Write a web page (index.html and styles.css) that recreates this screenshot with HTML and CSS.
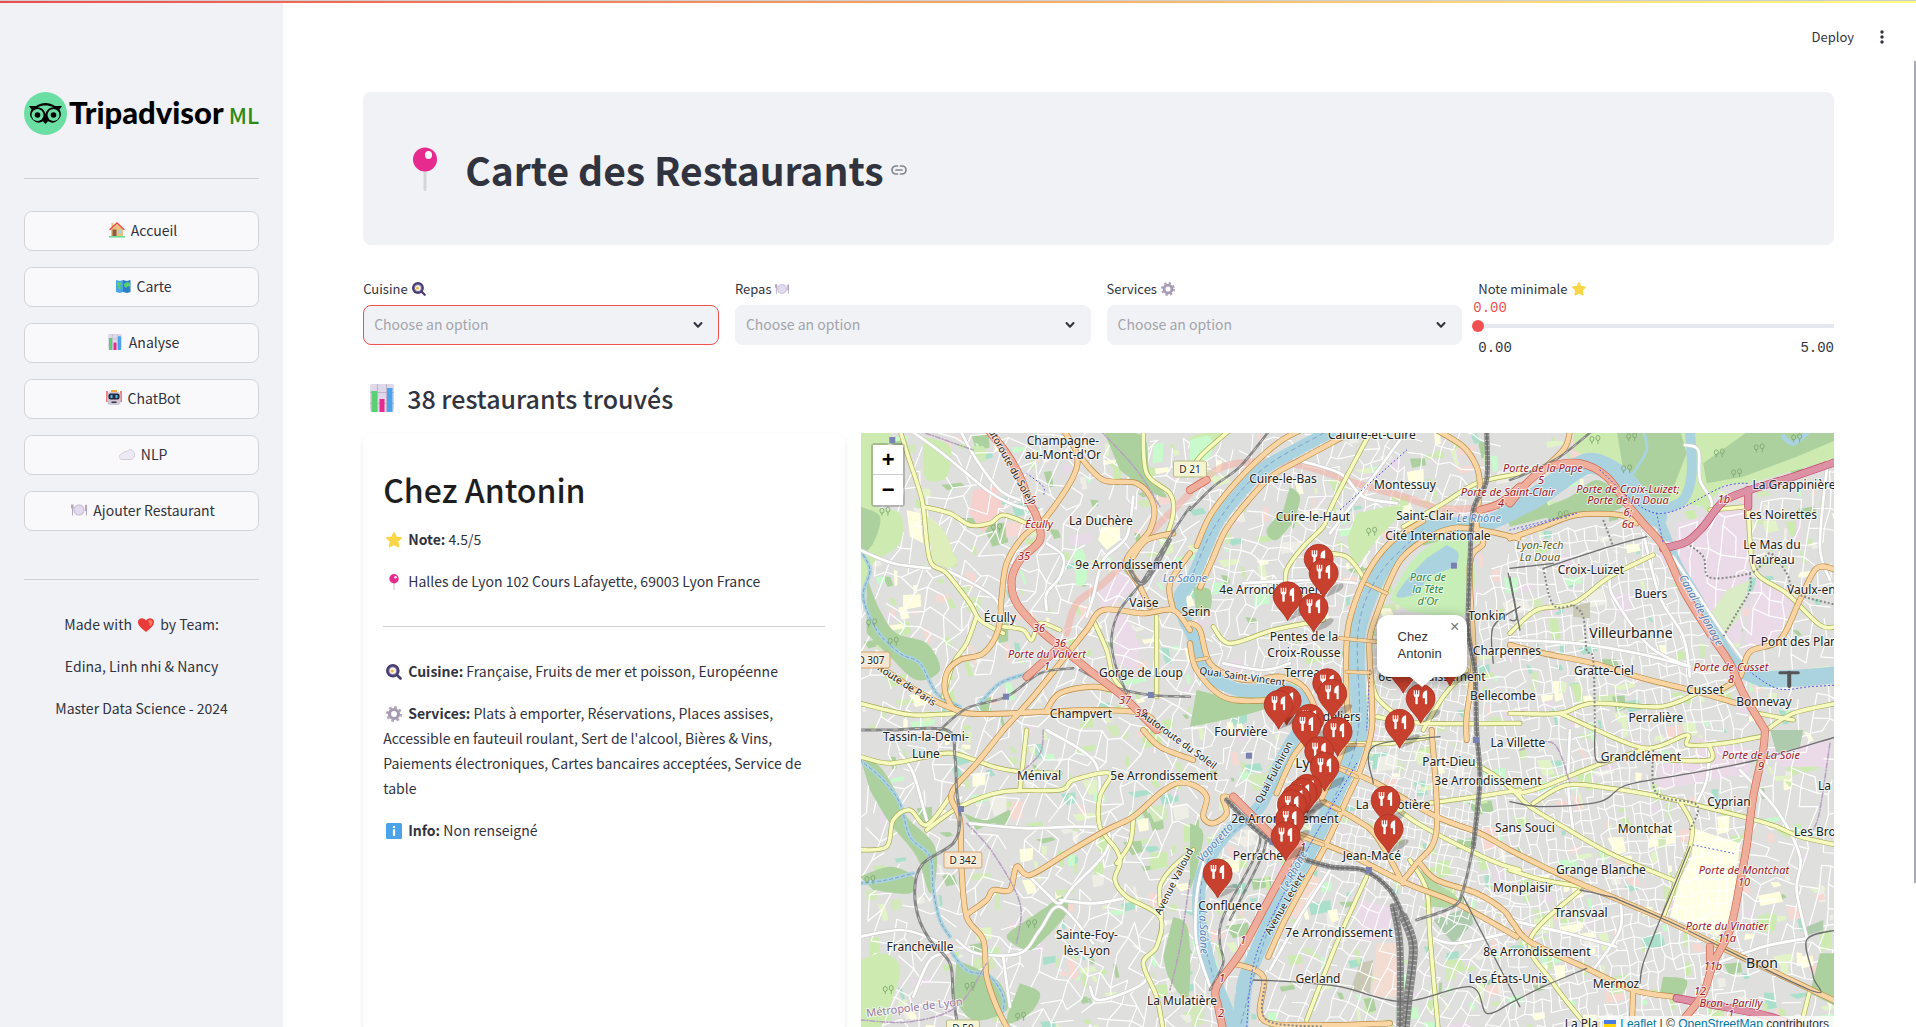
FILE: index.html
```html
<!DOCTYPE html>
<html lang="fr">
<head>
<meta charset="utf-8">
<title>Carte des Restaurants</title>
<link rel="stylesheet" href="styles.css">
</head>
<body>
<svg class="sprite" aria-hidden="true">
  <symbol id="i-house" viewBox="0 0 16 16"><path fill="#6bdc92" d="M0 14h16v1.6H0z"/><path fill="#edc27a" d="M2 7l6-5 6 5v7H2zM2.500 1h2v4h-2z"/><path fill="#8a5a44" d="M3.500 7.500h4V14h-4z"/><path fill="#9bcdf5" d="M9.500 8h3v3.500h-3z"/><path fill="none" stroke="#ef4a4a" stroke-width="1.400" stroke-linecap="round" d="M1 7.500L8 1l7 6.500"/></symbol>
  <symbol id="i-map" viewBox="0 0 16 16"><path fill="#4ba3ea" d="M1 2l4 1 3-1v12l-3 1-4-1z"/><path fill="#2b7fc4" d="M8 2l4 1 3.500-1v12L12 15l-4-1z"/><path fill="#5bd072" d="M2 4l4 .5 1 2-2 1 1 3-2 1.500L3 8 2 7zM9 6l3-2 3 1v4l-2-1-2 2-2-2z"/></symbol>
  <symbol id="i-chart" viewBox="0 0 24 28"><rect width="24" height="28" rx="2" fill="#dfd8ea"/><path stroke="#bdb3cb" fill="none" d="M0 8.500h24M0 19.500h24M7.500 0v28M16.500 0v28"/><path fill="#5bd072" d="M1.500 7h5.500v21H1.500z"/><path fill="#e72a8d" d="M9.500 15h5v13h-5z"/><path fill="#4ba3ea" d="M17 4h5.500v24H17z"/></symbol>
  <symbol id="i-robot" viewBox="0 0 16 16"><path stroke="#ea4040" stroke-width="1.300" d="M1 1v11M15 1v11"/><path fill="#f5a83b" d="M5 0h6v3H5z"/><rect x="1.500" y="2" width="13" height="13" rx="3" fill="#cfc6da"/><rect x="2.500" y="3.500" width="11" height="6" rx="2" fill="#26283a"/><path fill="#4fc1f2" d="M4.500 5h2v3h-2zM9.500 5h2v3h-2z"/><path fill="#35333d" d="M5.500 11.500h5v1.500h-5z"/></symbol>
  <symbol id="i-cloud" viewBox="0 0 16 16"><path fill="#eeeaf5" stroke="#cbc3d6" stroke-width=".8" d="M3 13.500C-1 13-.5 8 3.500 7.500 4.500 5 7 6 8.500 5c2.500-2.500 6.500-1 7 3 .4 3-1 5-3.500 5.500z"/></symbol>
  <symbol id="i-plate" viewBox="0 0 16 16"><circle cx="8" cy="8" r="5.800" fill="#d0c7de"/><circle cx="8" cy="8" r="4.200" fill="#e2daee"/><path fill="#b3a6bf" d="M0 2.500h2.600V6L2 7v6.500H1V7L0 6zM14 3q2-1 2 0v10.500h-1V9h-1z"/></symbol>
  <symbol id="i-heart" viewBox="0 0 16 16"><path fill="#ea3b3b" d="M8 15C3 11 0 8.500 0 5c0-4 5.500-5 8-1.500C10.500 0 16 1 16 5c0 3.500-3 6-8 10z"/><path fill="#f77b5e" d="M10 4c2-2.500 5-1 4.500 2-.5 2-2 3-3 3 0-2 0-4-1.500-5z"/></symbol>
  <symbol id="i-pin" viewBox="0 0 24 44"><rect x="10.500" y="20" width="3" height="24" rx="1.500" fill="#d6d6d6"/><circle cx="12" cy="12.500" r="12" fill="#e72a8d"/><ellipse cx="15.500" cy="8" rx="3.500" ry="4" fill="#fff"/></symbol>
  <symbol id="i-pushpin" viewBox="0 0 16 16"><path fill="#d6d6d6" d="M7.300 8h1.400v8H7.300z"/><circle cx="8" cy="4.700" r="4.700" fill="#e72a8d"/><circle cx="9.500" cy="3.200" r="1.200" fill="#fff"/></symbol>
  <symbol id="i-pan" viewBox="0 0 16 16"><path stroke="#483f6e" stroke-width="2.600" stroke-linecap="round" d="M10 10l4.500 4.500"/><circle cx="6.800" cy="6.800" r="6.800" fill="#483f6e"/><circle cx="6.800" cy="6.800" r="4.300" fill="#8c83b3"/><circle cx="6.800" cy="6.800" r="3.200" fill="#fff7ef"/><circle cx="6.200" cy="7" r="1.600" fill="#f6b83c"/></symbol>
  <symbol id="i-gear" viewBox="0 0 16 16"><circle cx="8" cy="8" r="6.800" fill="none" stroke="#b0a5bb" stroke-width="2.400" stroke-dasharray="2.700 2.640"/><circle cx="8" cy="8" r="4.500" fill="none" stroke="#a79bb4" stroke-width="3.200"/></symbol>
  <symbol id="i-star" viewBox="0 0 16 16"><path fill="#f9d648" stroke="#f9d648" stroke-width="1.800" stroke-linejoin="round" d="M8 1l2 4.300 5 .6-3.600 3.400 1 5.200L8 12.300l-4.400 2.200 1-5.200L1 5.900l5-.6z"/></symbol>
  <symbol id="i-info" viewBox="0 0 16 16"><rect width="16" height="16" rx="1.500" fill="#4ba3ea"/><path fill="#fff" d="M6.900 3h2.200v2H6.900zM6.900 6.300h2.200V13H6.900z"/></symbol>
  <symbol id="i-chev" viewBox="0 0 10 8"><path fill="none" stroke="#31333f" stroke-width="2" stroke-linecap="round" stroke-linejoin="round" d="M1.500 2L5 5.800 8.500 2"/></symbol>
</svg>

<div class="topline" aria-hidden="true"></div>
<div class="app">
  <aside class="sidebar">
    <div class="logo">
      <svg class="owl" viewBox="0 0 43 43" aria-hidden="true"><circle cx="21.500" cy="21.500" r="21.500" fill="#6bdfa3"/><path d="M5 14h7c6-4 13-4 19 0h7l-2.500 3.500a8.500 8.500 0 0 1-11.500 11.800L21.500 32 19 29.300A8.500 8.500 0 0 1 7.500 17.500z"/><path fill="#6bdfa3" d="M13.500 15.300c5-2.500 11-2.500 16 0-4.500.3-7.500 3.200-8 7.200-.5-4-3.500-6.900-8-7.200z"/><circle cx="13.500" cy="23" r="6" fill="#6bdfa3"/><circle cx="29.500" cy="23" r="6" fill="#6bdfa3"/><circle cx="13.500" cy="23" r="2.800"/><circle cx="29.500" cy="23" r="2.800"/></svg>
      <span class="brand">Tripadvisor</span><span class="ml">ML</span>
    </div>
    <hr>
    <nav class="menu">
      <button type="button"><svg class="emo"><use href="#i-house"/></svg>Accueil</button>
      <button type="button"><svg class="emo"><use href="#i-map"/></svg>Carte</button>
      <button type="button"><svg class="emo"><use href="#i-chart"/></svg>Analyse</button>
      <button type="button"><svg class="emo"><use href="#i-robot"/></svg>ChatBot</button>
      <button type="button"><svg class="emo"><use href="#i-cloud"/></svg>NLP</button>
      <button type="button"><svg class="emo"><use href="#i-plate"/></svg>Ajouter Restaurant</button>
    </nav>
    <hr class="low">
    <div class="credits">
      <p>Made with <svg class="emo"><use href="#i-heart"/></svg> by Team:</p>
      <p>Edina, Linh nhi &amp; Nancy</p>
      <p>Master Data Science - 2024</p>
    </div>
  </aside>

  <main class="main">
    <header class="toolbar">
      <button type="button">Deploy</button>
      <button type="button" aria-label="Menu"><svg class="dots" viewBox="0 0 4 16"><circle cx="2" cy="3" r="1.700"/><circle cx="2" cy="8" r="1.700"/><circle cx="2" cy="13" r="1.700"/></svg></button>
    </header>
    <section class="hero">
      <h1><svg class="bigpin"><use href="#i-pin"/></svg>Carte des Restaurants</h1>
      <a href="#carte" aria-label="Lien"><svg class="link" viewBox="0 0 16 10"><path fill="none" stroke="#85868c" stroke-width="1.700" stroke-linecap="round" d="M6.500 1H5a4 4 0 0 0 0 8h1.500M9.500 1H11a4 4 0 0 1 0 8H9.500M5 5h6"/></svg></a>
    </section>
    <form class="filters">
      <div class="field"><label for="cuisine">Cuisine <svg class="emo s"><use href="#i-pan"/></svg></label>
        <div class="pick on"><select id="cuisine"><option>Choose an option</option></select><svg class="chev"><use href="#i-chev"/></svg></div></div>
      <div class="field"><label for="repas">Repas <svg class="emo s"><use href="#i-plate"/></svg></label>
        <div class="pick"><select id="repas"><option>Choose an option</option></select><svg class="chev"><use href="#i-chev"/></svg></div></div>
      <div class="field"><label for="services">Services <svg class="emo s"><use href="#i-gear"/></svg></label>
        <div class="pick"><select id="services"><option>Choose an option</option></select><svg class="chev"><use href="#i-chev"/></svg></div></div>
      <div class="field"><label for="note">Note minimale <svg class="emo s"><use href="#i-star"/></svg></label>
        <output for="note">0.00</output>
        <input id="note" type="range" min="0" max="5" step="0.01" value="0">
        <div class="ticks"><span>0.00</span><span>5.00</span></div></div>
    </form>
    <h3 id="carte"><svg class="bars"><use href="#i-chart"/></svg>38 restaurants trouvés</h3>
    <div class="split">
      <article class="card">
        <h2>Chez Antonin</h2>
        <p><svg class="emo"><use href="#i-star"/></svg><b>Note:</b> 4.5/5</p>
        <p><svg class="emo"><use href="#i-pushpin"/></svg>Halles de Lyon 102 Cours Lafayette, 69003 Lyon France</p>
        <hr>
        <p><svg class="emo"><use href="#i-pan"/></svg><b>Cuisine:</b> Française, Fruits de mer et poisson, Européenne</p>
        <p><svg class="emo"><use href="#i-gear"/></svg><b>Services:</b> Plats à emporter, Réservations, Places assises, Accessible en fauteuil roulant, Sert de l'alcool, Bières &amp; Vins, Paiements électroniques, Cartes bancaires acceptées, Service de table</p>
        <p><svg class="emo"><use href="#i-info"/></svg><b>Info:</b> Non renseigné</p>
      </article>
      <section class="map" aria-label="Carte de Lyon">
        <svg id="map" viewBox="0 0 973 600" preserveAspectRatio="xMidYMid slice"></svg>
        <div class="zoom"><button type="button" aria-label="Zoom in">+</button><button type="button" aria-label="Zoom out">−</button></div>
        <div class="popup">Chez Antonin<button type="button" aria-label="Close">×</button></div>
        <div class="attrib"><svg class="flag" viewBox="0 0 12 8"><path fill="#4c7be1" d="M0 0h12v4H0z"/><path fill="#ffd500" d="M0 4h12v4H0z"/></svg><a href="#leaflet">Leaflet</a> | © <a href="#osm">OpenStreetMap</a> contributors</div>
      </section>
    </div>
  </main>
  <div class="scroll" aria-hidden="true"></div>
</div>
<script src="map.js"></script>
</body>
</html>
```
FILE: styles.css
```css
* { box-sizing: border-box; }
body { margin: 0; background: #fff; color: #31333f; font: 14px/25px "Noto Sans CJK JP", "Noto Sans", sans-serif; }
button, select, input { font: inherit; color: inherit; }
h1, h2, h3, p { margin: 0; }
hr { width: 100%; height: 1px; margin: 32px 0; border: 0; background: #cfd0d5; }
.sprite { position: absolute; width: 0; height: 0; }
.topline { position: absolute; z-index: 5; top: 0; left: 0; right: 0; height: 3px; border-top: 1px solid #cfcfcf; background: linear-gradient(90deg, #ee4c4c, #fffd80); }
.app { position: relative; display: flex; height: 100vh; overflow: hidden; }

.sidebar { flex: 0 0 283px; padding: 92px 24px 0; background: #f0f2f6; }
.logo { display: flex; align-items: center; height: 43px; margin-bottom: 43px; white-space: nowrap; }
.logo + hr { margin-top: 0; }
.owl { flex: none; width: 43px; height: 43px; }
.brand { margin-left: 2px; padding-bottom: 4px; color: #000; font: 900 31px/36px Lato, sans-serif; }
.ml { margin-left: 5px; color: #2f8a12; font-size: 22px; font-weight: 500; line-height: 40px; }
.menu { display: grid; gap: 16px; }
.menu button { display: flex; align-items: center; justify-content: center; height: 40px; padding: 0 0 2px; border: 1px solid #d2d4d9; border-radius: 8px; background: #f9f9fb; }
.emo { width: 16px; height: 16px; margin: 0 6px 0 3px; vertical-align: -3px; flex: none; }
.emo.s { width: 14px; height: 14px; margin: 0; }
.low { margin: 48px 0 32px; }
.credits { display: grid; gap: 17px; text-align: center; }
.credits .emo { margin: 0 3px; }

.main { position: relative; flex: 1; min-width: 0; padding: 92px 82px 0 80px; overflow: hidden; }
.toolbar { position: absolute; top: 24px; right: 32px; display: flex; gap: 26px; }
.toolbar button { display: flex; align-items: center; padding: 0; border: 0; background: none; font-size: 13px; }
.dots { width: 4px; height: 16px; fill: #31333f; }
.hero { display: flex; align-items: center; height: 153px; padding: 0 50px; border-radius: 8px; background: #f0f2f6; }
h1 { display: flex; align-items: center; font-size: 39px; line-height: 52px; font-weight: 700; }
.bigpin { width: 24px; height: 44px; margin-right: 28px; }
.hero a { display: flex; margin: 2px 0 0 7px; }
.link { width: 16px; height: 10px; }
.filters { display: grid; grid-template-columns: repeat(4, 1fr); gap: 16px; height: 102px; margin-top: 34px; }
.field { display: flex; flex-direction: column; min-width: 0; }
label { display: flex; align-items: center; gap: 4px; height: 19px; margin-bottom: 7px; font-size: 13px; line-height: 19px; }
.pick { position: relative; }
.pick select { appearance: none; width: 100%; height: 40px; padding: 0 10px 2px; border: 1px solid #f0f2f6; border-radius: 8px; background: #f0f2f6; color: #a3a4ab; outline: none; }
.pick.on select { border-color: #f0504f; }
.chev { position: absolute; right: 16px; top: 16px; width: 10px; height: 8px; pointer-events: none; }
output { margin: -5px 0 0 -5px; color: #f0504f; font: 14px/16px "Liberation Mono", monospace; }
input[type=range] { appearance: none; width: calc(100% + 6px); height: 12px; margin: 4px 0 0 -6px; background: linear-gradient(#e6e8ef, #e6e8ef) 6px 4px / 100% 4px no-repeat; outline: none; }
input[type=range]::-webkit-slider-thumb { appearance: none; width: 12px; height: 12px; border-radius: 50%; background: #f0504f; }
.ticks { display: flex; justify-content: space-between; margin-top: 8px; font: 14px/16px "Liberation Mono", monospace; }
h3 { display: flex; align-items: center; height: 34px; margin-bottom: 18px; padding-left: 7px; font-size: 25px; line-height: 34px; font-weight: 500; }
.bars { width: 24px; height: 28px; margin-right: 13px; }
.split { display: grid; grid-template-columns: 482fr 973fr; gap: 16px; }
.card { display: flex; flex-direction: column; gap: 17px; min-width: 0; padding: 35px 20px 20px; border-radius: 10px; box-shadow: 0 2px 4px rgba(0,0,0,.1); }
.card h2 { color: #1e1e1e; font-size: 32px; line-height: 42px; font-weight: 500; }
.card hr { margin: 15px 0; flex: none; }
.card b { font-weight: 700; }

.map { position: relative; height: 600px; overflow: hidden; background: #dedede; }
#map { display: block; width: 100%; height: 100%; }
#map text { font-family: "Noto Sans", sans-serif; text-anchor: middle; paint-order: stroke; stroke: rgba(255,255,255,.7); stroke-width: 2px; stroke-linejoin: round; }
.lbl { font-size: 12px; fill: #222; }
.lbl-big { font-size: 14px; fill: #222; }
.lbl-exit { font-size: 11px; font-style: italic; fill: #9b1c2c; }
.lbl-water { font-size: 11px; font-style: italic; fill: #5b82b5; }
.lbl-park { font-size: 11px; font-style: italic; fill: #31863b; }
.lbl-campus { font-size: 11px; font-style: italic; fill: #60602b; }
.lbl-road { font-size: 10px; fill: #222; }
.lbl-admin { font-size: 11px; fill: #9a78a0; }
.zoom { position: absolute; left: 10px; top: 10px; display: grid; border: 2px solid rgba(0,0,0,.2); border-radius: 4px; background-clip: padding-box; }
.zoom button { width: 30px; height: 30px; padding: 0; border: 0; background: #fff; color: #000; font: bold 22px/28px "Liberation Sans", sans-serif; }
.zoom button:first-child { border-bottom: 1px solid #ccc; }
.popup { position: absolute; left: calc(50% + 29px); top: 182px; width: 90px; padding: 13px 20px 15px 21px; border-radius: 12px; background: #fff; box-shadow: 0 3px 14px rgba(0,0,0,.4); color: #333; font: 13px/17px "Liberation Sans", sans-serif; }
.popup::after { content: ""; position: absolute; left: 33px; top: 62px; border: 12px solid transparent; border-top: 10px solid #fff; border-bottom: 0; }
.popup button { position: absolute; top: 0; right: 0; width: 24px; height: 24px; padding: 0; border: 0; background: none; color: #757575; font: 16px/24px "Liberation Sans", sans-serif; }
.attrib { position: absolute; right: 0; bottom: 0; padding: 0 5px; background: rgba(255,255,255,.8); color: #333; font: 12px/17px "Liberation Sans", sans-serif; }
.attrib a { color: #0078a8; text-decoration: underline; }
.flag { width: 12px; height: 8px; margin-right: 4px; }
.scroll { position: absolute; right: 0; top: 61px; width: 2px; height: 80%; background: #a9aab0; }
```
FILE: map.js
```js
// Draws the street map from vector data. Coordinates are thirds of a pixel inside lettered tiles.
const NS = 'http://www.w3.org/2000/svg';
const svg = document.getElementById('map');
const TILE = { A: [-3, -9], B: [987, -9], C: [1947, -9], D: [-3, 891], E: [987, 891], F: [1947, 891] };
const add = (name, attrs, text) => {
  const n = document.createElementNS(NS, name);
  for (const k in attrs) n.setAttribute(k, attrs[k]);
  if (text) n.textContent = text;
  svg.appendChild(n);
  return n;
};
function points(str) {
  let t = 'A';
  const out = [];
  str.split(/\s+/).forEach(w => {
    if (TILE[w]) { t = w; return; }
    const [x, y] = w.split(',').map(Number);
    out.push([(x + TILE[t][0]) / 3, (y + TILE[t][1]) / 3]);
  });
  return out;
}
const f = v => v.toFixed(1);
function curve(str) {
  const p = points(str);
  let d = 'M' + f(p[0][0]) + ' ' + f(p[0][1]);
  for (let i = 0; i < p.length - 1; i++) {
    const a = p[i - 1] || p[i], b = p[i], c = p[i + 1], e = p[i + 2] || c;
    d += 'C' + [b[0] + (c[0] - a[0]) / 6, b[1] + (c[1] - a[1]) / 6, c[0] - (e[0] - b[0]) / 6, c[1] - (e[1] - b[1]) / 6, c[0], c[1]].map(f).join(' ');
  }
  return d;
}
const line = (d, color, w, extra) => add('path', Object.assign({ d, fill: 'none', stroke: color, 'stroke-width': w, 'stroke-linejoin': 'round', 'stroke-linecap': 'round' }, extra));
const area = (str, fill) => add('path', { d: curve(str) + 'Z', fill });
const block = (str, fill) => add('path', { d: 'M' + points(str).map(p => p.map(f).join(' ')).join('L') + 'Z', fill });

let seed = 11;
const rnd = () => (seed = (seed * 16807) % 2147483647) / 2147483647;

add('rect', { width: 973, height: 600, fill: '#dfdfde' });

// land use patches
const USE = ['#ffffe0', '#cdebb0', '#e8dae6', '#c8facc', '#d3e9bb', '#eeeee6', '#f7d9d4', '#aae0cb', '#add19e', '#e3f3c8', '#cdebb0'];
for (let i = 0; i < 1300; i++) {
  const x = rnd() * 973, y = rnd() * 600, w = 3 + rnd() * rnd() * 24, h = 3 + rnd() * rnd() * 20, k = USE[Math.floor(rnd() * USE.length)];
  add('path', { d: `M${f(x)} ${f(y)}l${f(w)} ${f(-w * .2 + rnd() * 3)}l${f(rnd() * 5 - 1)} ${f(h)}l${f(-w * (.6 + rnd() * .5))} ${f(w * .2)}z`, fill: k });
}
block('C 500,280 700,230 720,420 690,640 640,640 500,390', '#ebdbe8');
block('C 740,440 860,500 800,620 700,690 720,520', '#ebdbe8');
block('F 560,20 720,60 720,130 440,180 450,100 560,90', '#ebdbe8');
block('F 780,60 960,30 960,110 810,110', '#ebdbe8');
block('F 550,295 690,340 680,440 660,580 620,620 480,560 510,450 545,380', '#ffffe5');
block('E 730,570 840,530 850,580 790,640', '#aecbae');
block('E 510,700 550,690 540,790 480,785', '#c9c8b4');
block('E 560,640 625,640 620,800 545,800', '#f3dcd2');
block('E 310,500 360,430 400,450 320,570 290,540', '#f3dcd2');
block('E 510,510 600,530 610,620 500,640', '#ebdbe8');
block('A 340,180 410,170 430,240 370,310 330,250', '#f7d1cd');
block('A 140,240 180,250 190,340 150,320', '#ffffe0');
block('A 725,290 780,290 780,330 740,360 715,330', '#ffffe0');
block('A 760,540 800,560 840,640 830,720 770,700', '#ebdbe8');
block('A 720,480 790,420 830,470 760,520 720,540', '#ebdbe8');

// minor streets
function streets(poly, ang, step, jit, keep, w) {
  const p = points(poly), xs = p.map(q => q[0]), ys = p.map(q => q[1]);
  const inside = (x, y) => { let c = false; for (let i = 0, j = p.length - 1; i < p.length; j = i++) if ((p[i][1] > y) !== (p[j][1] > y) && x < (p[j][0] - p[i][0]) * (y - p[i][1]) / (p[j][1] - p[i][1]) + p[i][0]) c = !c; return c; };
  const cx = (Math.min(...xs) + Math.max(...xs)) / 2, cy = (Math.min(...ys) + Math.max(...ys)) / 2, n = Math.ceil(500 / step), a = ang * Math.PI / 180, g = [];
  for (let i = -n; i <= n; i++) { g[i + n] = []; for (let j = -n; j <= n; j++) { const u = (i + (rnd() - .5) * jit) * step, v = (j + (rnd() - .5) * jit) * step * 1.35; g[i + n][j + n] = [cx + u * Math.cos(a) - v * Math.sin(a), cy + u * Math.sin(a) + v * Math.cos(a)]; } }
  let d = '';
  for (let i = 0; i < 2 * n; i++) for (let j = 0; j < 2 * n; j++) {
    const q = g[i][j];
    if (!inside(q[0], q[1])) continue;
    [g[i + 1][j], g[i][j + 1]].forEach(r => { if (rnd() < keep) d += `M${f(q[0])} ${f(q[1])}L${f(r[0])} ${f(r[1])}`; });
  }
  line(d, '#fff', w);
}
streets('A 0,0 990,0 990,895 D 990,891 0,891', 20, 14, .95, .68, 1.2);
streets('B 0,0 900,0 900,250 600,330 480,600 E 450,200 200,600 130,891 0,891', 12, 11, .7, .7, 1.1);
streets('B 540,560 830,560 E 850,0 860,560 660,560 560,470 360,380 520,60', 12, 7, .35, .82, 1);
streets('E 380,400 600,480 640,891 200,891 250,600', 22, 12, .4, .75, 1.1);
streets('E 680,580 990,400 F 0,891 E 680,891', 28, 11, .5, .75, 1.1);
streets('B 860,480 C 0,300 400,250 500,480 700,850 F 700,100 600,891 0,891 E 860,560', -8, 9, .5, .78, 1.1);
streets('C 480,300 970,100 F 970,891 580,891 720,200 C 740,850', 8, 14, .6, .65, 1.2);

// woods, parks and meadows
const WOOD = '#add19e', MEADOW = '#cdebb0';
block('C 190,0 980,0 980,85 720,160 640,165 590,230 500,220 430,230 360,180 290,110 190,60', MEADOW);
block('C 320,0 510,0 530,70 480,200 430,215 340,120', WOOD);
block('C 720,0 980,0 980,30 860,80 700,140 590,160 580,100', WOOD);
area('C 80,240 180,200 260,150 330,200 320,240 120,270', WOOD);
area('C 0,290 0,250 100,210 120,260', WOOD);
area('A 0,0 90,0 70,80 40,220 120,250 120,340 40,400 10,480 0,300', MEADOW);
area('A 0,230 60,260 40,340 0,380', WOOD);
area('A 20,440 60,540 110,610 200,640 240,720 170,750 90,680 20,610', WOOD);
area('A 180,240 250,300 280,370 290,400 230,420 210,330', '#ddeebb');
area('A 190,20 270,50 260,140 200,150 190,90', MEADOW);
area('D 0,80 60,110 110,190 140,260 220,340 230,420 210,490 170,380 90,280 30,180', WOOD);
area('D 0,440 90,410 160,440 150,490 40,480', WOOD);
area('D 0,690 70,670 120,710 100,800 60,891 0,891', MEADOW);
area('D 290,690 360,720 420,760 440,840 340,870 280,800', WOOD);
area('D 560,530 610,500 620,550 540,640 500,660 440,620 500,570', WOOD);
area('D 310,250 380,270 450,240 430,290 400,280 350,300', WOOD);
area('D 480,760 540,790 510,850 440,880 460,810', WOOD);
area('D 940,560 985,600 985,800 930,750 910,680', WOOD);
area('A 730,0 850,20 870,130 920,200 860,180 780,120', WOOD);
area('A 640,380 670,360 680,450 650,470', '#c8facc');
area('B 0,20 100,0 70,60 20,100 0,110', MEADOW);
area('B 0,30 60,20 60,80 0,100', '#c8facc');
area('B 300,170 330,200 310,270 260,330 230,300 280,240', WOOD);
area('B 10,470 60,480 60,540 20,560', WOOD);
area('B 20,780 120,800 220,790 240,830 100,870 0,890', WOOD);
area('B 500,250 640,230 560,330 500,400 470,330', MEADOW);
area('E 0,280 40,310 20,420 0,480', WOOD);
area('E 690,420 740,460 800,500 790,530 720,530', '#b5d8a5');
area('F 460,740 530,750 510,800 450,790', WOOD);
block('F 780,0 880,0 870,50 800,70', '#aecbae');
block('F 930,670 980,670 980,830 900,790', WOOD);
block('F 890,590 940,570 940,600 880,620', '#aecbae');
block('C 190,530 240,515 240,565 190,560', '#c9c8b4');
block('C 590,570 640,620 690,560 720,450 650,480', '#d9ecc6');

// water
const WATER = '#aad3df';
line(curve('C 540,0 545,130 520,210 450,240'), WATER, 10);
line(curve('C 0,240 80,200 150,150 240,100 330,140 400,220 440,260'), WATER, 21);
line(curve('C 400,220 450,280 500,400 560,500 620,610 680,700 760,745 850,745 975,735'), WATER, 10);
line(curve('C 700,720 760,745 850,745 975,735'), WATER, 17);
line(curve('C 820,20 850,40 890,10'), WATER, 5);
line(curve('C 370,130 410,60 400,0'), WATER, 3);
const saone = 'B 430,0 300,70 215,120 140,200 80,280 40,370 5,450 A 960,500 975,570 B 10,620 40,720 130,775 200,782 270,775 330,800 355,850 345,900 E 330,0 280,80 230,190 200,240 120,300 60,380 30,460 28,560 45,650 70,740 110,840 130,900';
const rhone = 'C 10,245 B 900,275 800,285 700,300 620,360 570,430 530,520 505,600 500,700 505,800 510,900 E 480,100 430,210 370,340 320,430 250,560 200,670 165,760 150,900';
const bank = (str, dx, dy) => str.replace(/(\d+),(\d+)/g, (m, x, y) => `${+x + dx},${+y + dy}`);
area('B 600,510 640,430 700,360 780,325 845,340 835,545 660,545', '#c8eeb8');
area('B 770,345 805,370 790,410 720,440 680,490 620,500 650,450 710,385', WATER);

// railways, trams
const rail = (s, w) => { line(curve(s), '#7c7c7c', w, { opacity: .9 }); line(curve(s), '#c4c4c4', w > 4 ? w - 1 : 1, { 'stroke-dasharray': w > 4 ? '1 4' : '5 6', 'stroke-linecap': 'butt' }); if (w > 4) line(curve(s), '#6c6c6c', 1.5); };
// road classes: casing, fill, width
const CLS = { w: ['#cfcfcf', '#fff', 3], s: ['#a5ab55', '#f7fabf', 4], p: ['#b98a45', '#f8d5a3', 5], t: ['#cf6650', '#efae9b', 7], m: ['#c24367', '#dc91a5', 7] };
const roads = [
  ['w', 'A 150,0 260,80 380,180 450,220 510,240'], ['w', 'A 300,0 350,90 420,180 480,210'], ['w', 'A 560,340 610,380 600,440 560,490 560,540'], ['w', 'A 820,200 800,320 730,390 700,500 680,560'],
  ['w', 'A 210,400 300,440 400,500 430,560'], ['w', 'A 0,360 100,400 210,415'], ['w', 'D 120,70 160,130 200,270'], ['w', 'D 330,280 500,295 650,290 740,300 735,370 640,470 600,520 560,490 510,440'],
  ['w', 'D 290,630 350,670 480,670 540,600 600,530 700,640'], ['w', 'D 600,510 700,520 790,505'], ['w', 'D 0,620 120,600 200,620 270,660 210,690 160,800'], ['w', 'D 430,680 440,760 450,830'], ['w', 'D 690,770 720,810 850,760 850,700'],
  ['w', 'D 560,0 700,90 720,200'], ['w', 'B 320,90 450,130 520,200 620,220'], ['w', 'B 630,30 520,180 420,310'], ['w', 'B 100,700 220,720 300,700'], ['w', 'B 160,460 370,450 500,460'],
  ['w', 'C 400,310 450,500 520,620 540,740'], ['w', 'C 0,630 200,640 380,670 540,710'], ['w', 'C 525,45 565,60 570,150 605,230 530,330 440,330 380,270'], ['w', 'C 490,380 620,580 700,690'], ['w', 'C 300,440 310,500 420,650 540,710'],
  ['w', 'C 950,120 930,350 960,450'], ['w', 'F 330,500 330,600 250,720'], ['w', 'F 600,50 590,150 560,220'], ['w', 'F 690,120 800,240 870,380 860,480 890,620'], ['w', 'F 620,700 760,650 890,625'], ['w', 'F 0,570 170,610 320,650'], ['w', 'F 180,0 175,170 190,300'],
  ['w', 'E 720,620 800,640 990,600'], ['w', 'E 40,400 20,500 20,640 60,770'], ['w', 'E 420,420 330,560 240,720'],
  ['s', 'A 120,0 145,80 175,170 190,230 210,390 260,430 330,520 360,570 430,610'], ['s', 'A 190,230 270,250 330,285 390,280 430,255 500,280'], ['s', 'A 350,560 320,640 280,700 250,800'], ['s', 'A 0,820 80,840 160,855 300,850'],
  ['s', 'A 430,590 490,600 515,630 540,580 600,600'], ['s', 'A 700,570 740,660 760,740 800,790'], ['s', 'A 850,0 860,130 930,190 940,250 920,320'], ['s', 'A 890,560 890,800'],
  ['s', 'D 0,80 90,100 200,80 280,70 400,110 480,125 600,130'], ['s', 'D 500,0 480,180'], ['s', 'D 200,300 300,230 430,185 600,180 640,150 750,130 720,200 720,290 770,360 780,400 765,450 800,500 900,560 890,650 850,700 890,800 910,900'],
  ['s', 'D 820,270 810,340 770,400'], ['s', 'D 0,360 80,350 100,270 150,240 200,285 270,200'], ['s', 'D 905,560 900,470 940,410 E 10,360'],
  ['s', 'B 545,0 470,140 420,240 400,290 340,350 290,420 290,480'], ['s', 'B 120,0 40,70 0,120'], ['s', 'B 400,370 470,380 520,440'], ['s', 'B 70,590 120,640 250,600 400,570'], ['s', 'B 700,900 760,800 830,720'], ['s', 'B 990,880 700,880 560,860'], ['s', 'B 990,130 860,160 760,220 640,290'], ['s', 'B 540,700 560,800 640,870'],
  ['s', 'C 0,610 80,540 190,520 300,440 430,375'], ['s', 'C 715,180 720,330 740,430 830,490 930,585 980,590'], ['s', 'C 600,240 710,230'], ['s', 'C 0,850 150,850 250,820 450,830 560,790'], ['s', 'C 150,850 260,900'], ['s', 'C 770,900 850,850 980,820'], ['s', 'C 740,850 850,870'],
  ['s', 'F 260,0 410,55 530,15 535,45 640,40 750,20'], ['s', 'E 990,190 F 100,170 250,110 410,55'], ['s', 'F 10,180 60,230 160,290 300,370 490,450'], ['s', 'F 70,220 170,165 300,175 450,200 700,260 800,290 870,320 980,345'],
  ['s', 'F 510,215 545,280 540,350 500,450 460,560'], ['s', 'F 0,420 100,450 220,470'], ['s', 'F 210,480 60,630 130,760 240,900'], ['s', 'F 900,780 870,900'], ['s', 'F 480,90 600,90 600,50'],
  ['s', 'E 530,440 440,640 350,870'], ['s', 'E 440,40 600,40 720,20'], ['s', 'E 600,220 700,290 900,390 990,420'], ['s', 'E 660,390 710,480 720,620 745,900'], ['s', 'E 640,230 860,200 990,180'], ['s', 'E 850,100 920,140 990,200'],
  ['p', 'A 610,0 650,70 640,140 560,260 490,320 440,400 425,500 415,600 370,670 300,690 260,730 260,800 320,850 560,845 700,840 850,850 900,900'], ['p', 'A 660,80 730,150 830,160 880,220 870,300 800,390 840,470 870,530'],
  ['p', 'A 430,900 520,800 600,700 680,600 730,540 850,550 940,540 990,600'], ['p', 'A 60,710 150,770 240,820 320,850'], ['p', 'A 560,840 600,790 700,770 800,790'], ['p', 'A 990,370 930,460 940,540'], ['p', 'A 940,310 860,330 820,380'],
  ['p', 'D 430,0 350,100 275,190 300,270 305,420 320,560 370,630 380,740 410,830 445,900'], ['p', 'D 325,550 380,510 400,480 450,480 470,410 510,435 620,370 740,300 820,260 900,190 950,160 E 10,165 50,200 40,260 70,280 110,250 100,200 150,220 180,250'], ['p', 'D 850,0 900,50 E 10,90'],
  ['p', 'B 740,0 820,50 860,110 870,170 860,290 880,340 840,400 850,640 850,720 830,860 E 830,30'],
  ['p', 'C 0,325 100,290 200,255 330,255 380,280'], ['p', 'C 0,645 100,670 250,700 400,745 560,785 680,820'], ['p', 'C 980,420 920,415 870,510 810,630 720,665 690,740 640,775'], ['p', 'C 180,0 160,60 60,150 0,190'],
  ['p', 'E 440,110 560,160 740,260 870,310 F 0,360 100,410 220,465 340,515 500,585 650,660 800,730 980,815'], ['p', 'E 320,310 470,370 650,460 800,520 980,620'], ['p', 'E 400,215 500,270 560,320 640,460'], ['p', 'E 690,400 740,450 860,490 940,540 F 10,580 60,635 230,715 370,780 490,800'],
  ['p', 'E 725,0 740,300 680,400 640,450'], ['p', 'E 130,700 220,740 220,870 400,885 600,880'], ['p', 'F 370,780 365,900'],
  ['p', 'B 985,325 900,305 800,293 720,320 640,380 600,450 565,540 540,620 540,700 545,800 545,900 E 515,110 465,220 405,350 355,440 285,570 235,680'], ['p', 'B 700,272 610,330 550,400 505,490 475,590 468,700 470,800 475,900 E 445,95 395,205'],
  ['p', bank('B 400,0 300,50 215,120 140,200 80,280 40,370', -20, -22)], ['p', bank('B 430,0 300,70 215,120 140,200 80,280 40,370 5,450', 26, 22)],
  ['p', 'B 0,580 30,600 60,700 140,745 200,750 270,740 340,770 380,850 370,900 E 310,80 260,190'], ['p', 'B 0,640 20,720 100,800 200,812 290,800'],
  ['m', 'C 980,95 850,140 720,180 640,215 580,290 530,335 460,355'], ['m', 'C 715,180 715,230'], ['m', 'F 500,805 640,830 780,860 890,900'],
  ['t', 'A 385,0 440,70 480,140 510,220 530,260 540,330 480,390 455,450 470,520 540,600 600,650 700,730 790,800 850,860 890,900'], ['t', 'A 600,650 500,740'],
  ['t', 'C 0,220 60,150 120,110 210,100 290,140 350,220 400,280 460,350 520,480 600,610 660,700 700,790 765,900'], ['t', 'F 765,0 760,60 730,200 710,350 690,460 660,600 610,700 580,790 520,870'], ['t', 'F 600,650 600,690'],
  ['t', 'E 330,340 290,410 220,540 150,670 80,770 85,830 100,900'], ['t', 'E 130,200 200,270 250,320'], ['t', 'B 870,240 930,220 990,170'], ['t', 'B 0,180 50,150']
];
const tunnel = { opacity: .6 };
line(curve('B 0,180 100,110 220,95 350,110 500,160 640,200 750,235 860,235'), '#f2b3a6', 7, tunnel);
line(curve('A 620,610 650,520 730,460 800,390 880,300 990,190'), '#f2b3a6', 7, tunnel);
const draw = k => {
  const r = roads.filter(x => x[0] === k), c = CLS[k];
  r.forEach(x => line(curve(x[1]), c[0], c[2] + 1));
  r.forEach(x => line(curve(x[1]), c[1], c[2] - .3));
};
line(curve(saone), WATER, 13);
line(curve(rhone), WATER, 16);
['A 0,360 30,420 10,500 50,600 120,670 180,700 230,790 300,830', 'A 360,820 420,760 500,730 560,700', 'D 0,90 70,150 120,220 150,320 210,380 220,480 240,570 270,620', 'D 0,460 80,450 160,430', 'D 270,660 320,720 390,740 430,800 430,840'].forEach(s => { line(curve(s), WATER, 4); line(curve(s), '#7d9fc0', 1, { 'stroke-dasharray': '3 3' }); });
draw('w'); draw('s'); draw('p');
['B 530,462 590,490', 'B 450,625 560,635', 'B 470,725 540,728', 'E 455,45 520,45', 'E 430,110 500,140', 'E 395,215 450,240', 'B 20,690 50,685', 'E 330,320 400,345'].forEach(s => { line(curve(s), '#b98a45', 4); line(curve(s), '#f8d5a3', 3); });
['A 240,900 320,835 440,800 540,730 640,715', 'A 660,720 760,770 870,795 990,800', 'A 990,230 930,320 850,450 780,540 755,620 765,700 800,790', 'B 240,0 150,110 70,170 0,240', 'C 250,0 150,80 50,130 0,150', 'E 210,310 200,370 100,560 90,640 100,700 60,780', 'E 230,310 215,380 120,570'].forEach(s => rail(s, 2.5));
['D 0,0 90,0 260,0 285,80 290,180 300,270 280,340 190,400 165,470 175,560 210,630 270,700 280,800 295,900', 'E 850,350 820,480 790,530 680,570'].forEach(s => rail(s, 3));
rail('A 800,400 850,460 930,330', 4);
rail('B 890,0 890,150 850,240 840,400 835,600 855,720 860,900 E 870,150 850,350', 5);
rail('E 110,210 200,300 300,370 420,410 520,420 600,480 640,560', 5);
rail('E 640,560 670,650 655,800 645,900', 9);
rail('E 610,530 630,650 630,900', 7);
['C 100,415 300,350 410,320', 'C 0,415 130,400', 'C 0,440 20,560 0,570', 'F 0,215 100,230 270,215 350,165 540,130 740,90 980,20', 'F 540,350 500,450 450,570 400,700 390,760', 'F 210,480 300,500 340,515 500,585 900,780 910,740 890,630 980,600', 'F 0,820 100,770 230,715', 'F 255,0 258,90 300,95', 'E 190,750 300,755 450,770 640,815 840,770 890,850 F 0,820', 'E 550,160 550,50 750,20', 'B 990,530 910,590 910,700', 'B 955,430 990,600', 'E 820,500 990,830'].forEach(s => line(curve(s), '#6e6e6e', 1.3));
['C 530,340 580,380 595,440 670,440 740,420 780,370 830,430 860,490 980,525', 'C 720,430 720,480 680,550 640,620', 'C 190,525 220,560 230,660 250,690 255,900', 'F 430,60 440,190 560,225 540,300', 'C 100,415 130,525 190,525', 'C 280,270 310,350', 'E 225,760 230,870 400,890'].forEach(s => line(curve(s), '#888', 2, { 'stroke-dasharray': '2 2', 'stroke-linecap': 'butt' }));
draw('m'); draw('t');
['C 0,300 200,250 B 990,300', 'C 270,120 440,250 640,170 720,160', 'C 440,250 460,340', 'C 700,710 800,775 900,770 980,765', 'B 540,720 530,900', 'E 500,100 330,400 200,670 170,891', 'F 550,345 670,370', 'B 650,60 450,240', 'A 500,130 550,170 550,200'].forEach(s => line(curve(s), '#4a4ae8', 1, { 'stroke-dasharray': '1 3' }));
['B 400,10 215,120 80,280 10,430', 'B 700,300 570,430 505,600 505,900 E 430,210 250,560 150,890', 'E 280,80 200,240 60,380 30,560 70,740'].forEach(s => line(curve(s), '#7f9ec9', 1, { 'stroke-dasharray': '4 4' }));
['A 170,0 340,60', 'A 720,0 830,120 900,230', 'D 320,280 400,370 480,520 470,640', 'D 0,870 150,875 290,830 380,700', 'D 550,0 540,70 480,130', 'E 990,60 F 130,40 180,160', 'D 990,450 960,650 930,780', 'F 960,40 930,240 910,300'].forEach(s => line(curve(s), '#b79fc0', 1.5, { 'stroke-dasharray': '5 2 1 2' }));
line(curve('C 810,728 865,728'), '#555', 3); line(curve('C 838,728 838,768'), '#555', 4);
['A 97,30', 'A 438,800', 'A 873,795', 'D 303,237', 'E 177,77', 'E 247,335', 'E 537,420', 'E 858,30', 'B 792,407'].forEach(s => { const [p] = points(s); add('rect', { x: p[0] - 3, y: p[1] - 3, width: 6, height: 6, fill: '#7981b0' }); });
// tree glyphs
['A 75,245', 'A 35,580', 'A 100,635', 'C 365,22', 'C 350,118', 'C 628,70', 'C 748,55', 'C 680,130', 'C 255,30', 'C 160,255', 'D 30,450', 'D 85,780', 'D 330,770', 'D 515,582', 'D 482,860', 'B 545,305', 'A 410,295', 'C 860,25'].forEach(s => { const [p] = points(s); add('path', { d: `M${f(p[0] - 3)} ${f(p[1] + 4)}v-3m-2-2a2 2.500 0 1 0 4 0a2 2.500 0 1 0-4 0M${f(p[0] + 3)} ${f(p[1] + 4)}v-4m-2-2a2 2.500 0 1 0 4 0a2 2.500 0 1 0-4 0`, fill: 'none', stroke: '#7fa873', 'stroke-width': .9 }); });

// place names: class, tile, centre x, baseline y, text, rotation
[['lbl', 'A', 610, 46, 'Champagne-'], ['lbl', 'A', 610, 88, "au-Mont-d'Or"], ['lbl', 'A', 722, 284, 'La Duchère'], ['lbl', 'A', 807, 416, '9e Arrondissement'], ['lbl', 'A', 851, 532, 'Vaise'], ['lbl-mid', 'A', 420, 575, 'Écully'], ['lbl', 'A', 844, 741, 'Gorge de Loup'], ['lbl', 'A', 663, 863, 'Champvert'], ['lbl', 'B', 18, 558, 'Serin'],
['lbl-exit', 'A', 510, 222, '35'], ['lbl-exit', 'A', 537, 295, 'Écully'], ['lbl-exit', 'A', 492, 390, '35'], ['lbl-exit', 'A', 538, 605, '36'], ['lbl-exit', 'A', 599, 650, '36'], ['lbl-exit', 'A', 562, 685, 'Porte du Valvert'], ['lbl-exit', 'A', 562, 720, '1'], ['lbl-exit', 'A', 796, 822, '37'], ['lbl-exit', 'A', 842, 860, '38'],
['lbl-road', 'A', 440, 105, 'Autoroute du Soleil', 61], ['lbl-road', 'A', 135, 775, 'Route de Paris', 33], ['lbl-water', 'A', 975, 455, 'La Saône'],
['lbl', 'B', 545, 27, 'Caluire-et-Cuire'], ['lbl', 'B', 279, 158, 'Cuire-le-Bas'], ['lbl', 'B', 645, 176, 'Montessuy'], ['lbl', 'B', 368, 273, 'Cuire-le-Haut'], ['lbl', 'B', 704, 271, 'Saint-Clair'], ['lbl', 'B', 744, 330, 'Cité Internationale'], ['lbl', 'B', 250, 493, '4e Arrondissement'], ['lbl', 'B', 342, 633, 'Pentes de la'], ['lbl', 'B', 342, 680, 'Croix-Rousse'], ['lbl', 'B', 357, 742, 'Terreaux'], ['lbl', 'B', 425, 872, 'Cordeliers'], ['lbl', 'B', 891, 570, 'Tonkin'], ['lbl', 'B', 950, 675, 'Charpennes'], ['lbl', 'B', 727, 752, 'Bellecombe-dissement'], ['lbl', 'B', 940, 809, 'Bellecombe'],
['lbl-exit', 'C', 100, 127, 'Porte de la Pape'], ['lbl-exit', 'C', 92, 163, '5'], ['lbl-exit', 'B', 955, 197, 'Porte de Saint-Clair'], ['lbl-exit', 'B', 932, 232, '4'], ['lbl-water', 'B', 866, 276, 'Le Rhône'], ['lbl-park', 'B', 715, 453, 'Parc de'], ['lbl-park', 'B', 715, 489, 'la Tête'], ['lbl-park', 'B', 715, 525, "d'Or"], ['lbl-road', 'B', 155, 750, 'Quai Saint-Vincent', 8],
['lbl-exit', 'C', 355, 188, 'Porte de Croix-Luizet;'], ['lbl-exit', 'C', 355, 223, 'Porte de la Doua'], ['lbl-exit', 'C', 354, 259, '6;'], ['lbl-exit', 'C', 354, 295, '6a'], ['lbl-exit', 'C', 642, 219, '1b'], ['lbl-exit', 'C', 663, 724, 'Porte de Cusset'], ['lbl-exit', 'C', 663, 760, '8'],
['lbl-campus', 'C', 90, 357, 'Lyon-Tech'], ['lbl-campus', 'C', 90, 392, 'La Doua'], ['lbl', 'C', 242, 432, 'Croix-Luizet'], ['lbl', 'C', 423, 503, 'Buers'], ['lbl-big', 'C', 363, 623, 'Villeurbanne'], ['lbl', 'C', 282, 734, 'Gratte-Ciel'], ['lbl', 'C', 586, 793, 'Cusset'], ['lbl', 'C', 438, 877, 'Perralière'], ['lbl', 'C', 761, 828, 'Bonnevay'], ['lbl', 'C', 853, 177, 'La Grappinière'], ['lbl', 'C', 811, 268, 'Les Noirettes'], ['lbl', 'C', 785, 357, 'Le Mas du'], ['lbl', 'C', 785, 403, 'Taureau'], ['lbl', 'C', 950, 493, 'Vaulx-en-Velin'], ['lbl', 'C', 905, 647, 'Pont des Planches'], ['lbl-water', 'C', 565, 545, 'Canal de Jonage', 61],
['lbl', 'D', 198, 33, 'Tassin-la-Demi-'], ['lbl', 'D', 198, 83, 'Lune'], ['lbl', 'D', 537, 149, 'Ménival'], ['lbl', 'D', 913, 149, '5e Arrondissement'], ['lbl', 'D', 179, 662, 'Francheville'], ['lbl', 'D', 681, 626, 'Sainte-Foy-'], ['lbl', 'D', 681, 676, 'lès-Lyon'], ['lbl', 'D', 965, 826, 'La Mulatière'], ['lbl-admin', 'D', 165, 842, 'Métropole de Lyon', -7], ['lbl-road', 'D', 950, 460, 'Avenue Valioud', -63],
['lbl', 'E', 152, 17, 'Fourvière'], ['lbl-big', 'E', 362, 113, 'Lyon'], ['lbl-road', 'E', 262, 132, 'Quai Fulchiron', -62], ['lbl-road', 'D', 950, 40, 'Autoroute du Soleil', 36], ['lbl', 'E', 284, 278, '2e Arrondissement'], ['lbl', 'E', 205, 389, 'Perrache'], ['lbl', 'E', 119, 539, 'Confluence'], ['lbl', 'E', 547, 390, 'Jean-Macé'], ['lbl', 'E', 610, 238, 'La Guillotière'], ['lbl', 'E', 778, 107, 'Part-Dieu'], ['lbl', 'F', -66, 166, '3e Arrondissement'], ['lbl', 'E', 983, 50, 'La Villette'], ['lbl', 'E', 447, 620, '7e Arrondissement'], ['lbl', 'E', 384, 758, 'Gerland'], ['lbl-water', 'E', 85, 345, 'Vaporetto', -48], ['lbl-water', 'E', 322, 430, 'Le Rhône', -62], ['lbl-water', 'E', 30, 605, 'La Saône', 88], ['lbl-road', 'E', 295, 525, 'Avenue Leclerc', -60], ['lbl-exit', 'E', 340, 362, '1'], ['lbl-exit', 'E', 158, 643, '1'], ['lbl-exit', 'E', 95, 755, '1'], ['lbl-exit', 'E', 93, 862, '2'],
['lbl', 'F', 394, 94, 'Grandclément'], ['lbl', 'F', 656, 227, 'Cyprian'], ['lbl', 'F', 46, 307, 'Sans Souci'], ['lbl', 'F', 406, 308, 'Montchat'], ['lbl', 'F', 272, 432, 'Grange Blanche'], ['lbl', 'F', 38, 487, 'Monplaisir'], ['lbl', 'F', 212, 562, 'Transvaal'], ['lbl', 'F', 82, 678, '8e Arrondissement'], ['lbl', 'F', -5, 758, 'Les États-Unis'], ['lbl', 'F', 319, 774, 'Mermoz'], ['lbl-big', 'F', 755, 714, 'Bron'], ['lbl', 'F', 240, 893, 'La Plaine'], ['lbl', 'F', 950, 317, 'Les Brosses'], ['lbl', 'F', 985, 180, 'La Soie'],
['lbl-exit', 'F', 753, 86, 'Porte de La Soie'], ['lbl-exit', 'F', 753, 121, '9'], ['lbl-exit', 'F', 701, 433, 'Porte de Montchat'], ['lbl-exit', 'F', 701, 469, '10'], ['lbl-exit', 'F', 650, 599, 'Porte du Vinatier'], ['lbl-exit', 'F', 650, 635, '11a'], ['lbl-exit', 'F', 608, 719, '11b'], ['lbl-exit', 'F', 570, 796, '12'], ['lbl-exit', 'F', 663, 830, 'Bron - Parilly'], ['lbl-exit', 'F', 663, 863, '1']
].forEach(([c, t, x, y, s, r]) => {
  const X = Math.round((x + TILE[t][0]) / 3), Y = Math.round((y + TILE[t][1]) / 3);
  add('text', Object.assign({ class: c === 'lbl-mid' ? 'lbl' : c, x: X, y: Y }, r ? { transform: `rotate(${r} ${X} ${Y})` } : {}), s.replace('Bellecombe-dissement', '6e Arrondissement'));
});
// road number shields
[['B', 0, 118, 'D 21', '#f4f4cf', '#b8b98a'], ['A', 32, 690, 'D 307', '#f6e6cf', '#d4a573'], ['D', 309, 390, 'D 342', '#f6e6cf', '#d4a573'], ['D', 309, 893, 'D 50', '#f4f4cf', '#b8b98a']].forEach(([t, x, y, s, a, b]) => {
  const X = Math.round((x + TILE[t][0]) / 3), Y = Math.round((y + TILE[t][1]) / 3), w = s.length > 4 ? 38 : 33;
  add('rect', { x: X - w / 2, y: Y - 8, width: w, height: 16, rx: 2, fill: a, stroke: b });
  add('text', { class: 'lbl-road', x: X, y: Y + 4 }, s);
});

// restaurant markers, tip position
['B 640,790', 'B 780,768', 'B 386,460', 'B 401,503', 'B 293,572', 'B 371,607', 'B 412,833', 'B 427,865', 'B 692,880', 'B 290,886', 'B 266,898', 'B 359,940', 'E 629,55', 'E 350,60', 'E 443,79', 'E 388,137', 'E 404,184', 'E 352,250', 'E 338,262', 'E 587,285', 'E 318,280', 'E 306,297', 'E 300,342', 'E 596,370', 'E 287,392', 'E 83,504'].forEach(s => {
  const [p] = points(s), at = `translate(${f(p[0] - 15)} ${f(p[1] - 39)})`;
  add('path', { transform: at, fill: '#000', opacity: .22, d: 'M16 39L24 28Q32 23 35 26Q35 30 28 34z' });
  add('path', { transform: at, fill: '#c8402e', stroke: '#a93222', 'stroke-width': .8, d: 'M15 39C11 30 .500 24 .500 14.500A14.500 14.500 0 0 1 29.500 14.500C29.500 24 19 30 15 39z' });
  add('path', { transform: at, fill: '#fff', d: 'M8 6h1.200v4h1V6h1.300v4h1V6h1.200v5q0 1.500-1.600 2v6.500q-1.200 1-2.400 0V13Q8 12.500 8 11zM21.500 6v13.500q-1.200 1-2.200 0V14h-2.300V10.500Q17.500 6.500 21.500 6z' });
});
```
